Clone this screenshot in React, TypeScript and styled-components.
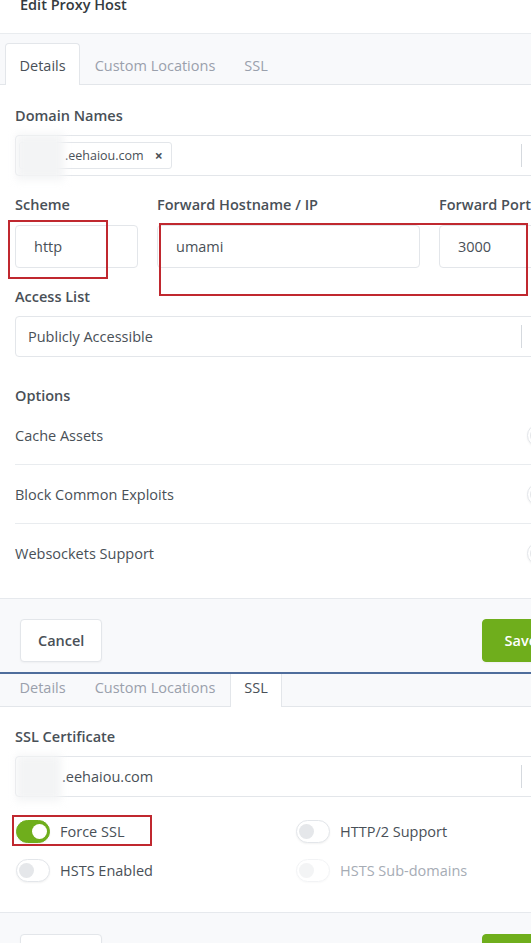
import styled, { createGlobalStyle } from 'styled-components';

const GlobalStyle = createGlobalStyle`
    html, body {
        margin: 0;
        padding: 0;
        background: #fff;
        overflow: hidden;
    }
    body {
        font-family: "Open Sans", "Noto Sans", sans-serif;
        color: #495057;
        -webkit-font-smoothing: antialiased;
    }
`;

const Page = styled.div`
    width: 580px;
`;

const Shot = styled.section`
    background: #fff;
`;

const Header = styled.header`
    height: 33px;
    padding: 0 20px;
    border-bottom: 1px solid #e9ecef;
    overflow: hidden;
`;

const Title = styled.h5`
    margin: -5px 0 0;
    font-size: 14.5px;
    font-weight: 600;
    line-height: 20px;
    color: #343a40;
`;

const TabBar = styled.nav<{ $height: number }>`
    display: flex;
    align-items: flex-end;
    height: ${(p) => p.$height}px;
    padding-left: 5px;
    background: #f8f9fb;
    border-bottom: 1px solid #e3e6ea;
`;

const Tab = styled.div<{ $active?: boolean; $compact?: boolean }>`
    height: ${(p) => (p.$compact ? 27 : 38)}px;
    padding: ${(p) => (p.$compact ? '0 13.5px 6px' : '3px 13.5px 0')};
    margin-bottom: -1px;
    line-height: ${(p) => (p.$compact ? 27 : 38)}px;
    font-size: 14.5px;
    color: ${(p) => (p.$active ? '#495057' : '#9aa0ac')};
    background: ${(p) => (p.$active ? '#fff' : 'transparent')};
    border: 1px solid ${(p) => (p.$active ? '#e3e6ea' : 'transparent')};
    border-bottom: none;
    border-top-width: ${(p) => (p.$compact ? 0 : 1)}px;
    border-radius: ${(p) => (p.$compact ? '0' : '4px 4px 0 0')};
`;

const Body = styled.div<{ $top: number; $bottom: number }>`
    padding: ${(p) => p.$top}px 15px ${(p) => p.$bottom}px;
`;

const Label = styled.div<{ $gap?: number }>`
    font-size: 14.5px;
    font-weight: 600;
    line-height: 20px;
    color: #495057;
    margin-bottom: ${(p) => p.$gap ?? 9}px;
`;

const Group = styled.div<{ $after?: number }>`
    margin-bottom: ${(p) => p.$after ?? 19}px;
`;

const FieldRow = styled.div`
    position: relative;
    display: grid;
    grid-template-columns: 123px 263px 1fr;
    column-gap: 19px;
    margin-bottom: 19px;
`;

const TextInput = styled.div`
    height: 43px;
    box-sizing: border-box;
    display: flex;
    align-items: center;
    padding: 0 18px;
    border: 1px solid #e3e6ea;
    border-radius: 4px;
    font-size: 14.5px;
    color: #495057;
`;

const Select = styled.div`
    position: relative;
    height: 41px;
    box-sizing: border-box;
    display: flex;
    align-items: center;
    border: 1px solid #e3e6ea;
    border-radius: 4px;
    font-size: 14.5px;
    color: #495057;
`;

const SelectValue = styled.div<{ $indent?: number }>`
    flex: 1;
    display: flex;
    align-items: center;
    padding-left: ${(p) => p.$indent ?? 12}px;
`;

const Indicator = styled.div`
    width: 42px;
    height: 23px;
    border-left: 1px solid #d5d9de;
`;

const Tag = styled.span`
    display: inline-flex;
    align-items: center;
    height: 27px;
    box-sizing: border-box;
    margin-left: 3px;
    padding: 0 8px 0 45px;
    gap: 11px;
    border: 1px solid #e3e6ea;
    border-radius: 3px;
    background: #fff;
    font-size: 12.5px;
`;

const TagRemove = styled.span`
    font-size: 14px;
    font-weight: 700;
    color: #495057;
`;

const Redaction = styled.span<{ $w: number }>`
    position: absolute;
    left: 0;
    top: -2px;
    width: ${(p) => p.$w}px;
    height: 46px;
    background: #f3f4f5;
    filter: blur(4px);
`;

const Annotation = styled.div<{ $x: number; $y: number; $w: number; $h: number }>`
    position: absolute;
    left: ${(p) => p.$x}px;
    top: ${(p) => p.$y}px;
    width: ${(p) => p.$w}px;
    height: ${(p) => p.$h}px;
    box-sizing: border-box;
    border: 2px solid #c0282f;
    pointer-events: none;
`;

const OptionRow = styled.div<{ $last?: boolean }>`
    display: flex;
    align-items: center;
    justify-content: space-between;
    height: 58px;
    padding-right: 4px;
    border-bottom: ${(p) => (p.$last ? 'none' : '1px solid #e9ecef')};
    font-size: 14.5px;
    color: #495057;
`;

const Switch = styled.span<{ $on?: boolean; $disabled?: boolean }>`
    position: relative;
    display: inline-block;
    width: 34px;
    height: 23px;
    box-sizing: border-box;
    flex: none;
    border-radius: 12px;
    border: 1px solid ${(p) => (p.$on ? '#6fae1c' : '#e3e6ea')};
    background: ${(p) => (p.$on ? '#6fae1c' : '#fff')};
    box-shadow: 0 1px 2px rgba(0, 0, 0, 0.05);
    opacity: ${(p) => (p.$disabled ? 0.45 : 1)};

    &::after {
        content: '';
        position: absolute;
        top: 3px;
        left: ${(p) => (p.$on ? '15px' : '2px')};
        width: 15px;
        height: 15px;
        border-radius: 50%;
        background: ${(p) => (p.$on ? '#fff' : '#e5e7ea')};
    }
`;

const SwitchGrid = styled.div`
    display: grid;
    grid-template-columns: 280px 1fr;
    row-gap: 16px;
    padding-top: 23px;
`;

const SwitchItem = styled.label<{ $disabled?: boolean }>`
    position: relative;
    display: flex;
    align-items: center;
    gap: 10px;
    margin-left: 1px;
    font-size: 14.5px;
    line-height: 23px;
    color: ${(p) => (p.$disabled ? '#a6acb5' : '#495057')};
`;

const Footer = styled.footer<{ $height: number; $padTop: number }>`
    display: flex;
    align-items: flex-start;
    height: ${(p) => p.$height}px;
    box-sizing: border-box;
    padding: ${(p) => p.$padTop}px 20px 0;
    overflow: hidden;
    background: #f8f9fb;
    border-top: 1px solid #e6e9ed;
`;

const Button = styled.button<{ $primary?: boolean }>`
    height: 43px;
    padding: 0 ${(p) => (p.$primary ? 22 : 17)}px;
    margin-left: ${(p) => (p.$primary ? 'auto' : '0')};
    border-radius: 4px;
    border: 1px solid ${(p) => (p.$primary ? '#6fae1c' : '#e3e6ea')};
    background: ${(p) => (p.$primary ? '#6fae1c' : '#fff')};
    color: ${(p) => (p.$primary ? '#fff' : '#495057')};
    font-family: inherit;
    font-size: 14.5px;
    font-weight: 600;
    box-shadow: 0 1px 2px rgba(0, 0, 0, 0.04);
`;

const Seam = styled.div`
    height: 2px;
    background: #4f6d9c;
`;

const options = ['Cache Assets', 'Block Common Exploits', 'Websockets Support'];

function App() {
    return (
        <Page>
            <GlobalStyle />
            <Shot>
                <Header>
                    <Title>Edit Proxy Host</Title>
                </Header>
                <TabBar $height={50}>
                    <Tab $active>Details</Tab>
                    <Tab>Custom Locations</Tab>
                    <Tab>SSL</Tab>
                </TabBar>
                <Body $top={21} $bottom={16}>
                    <Group>
                        <Label>Domain Names</Label>
                        <Select>
                            <SelectValue $indent={0}>
                                <Tag>
                                    .eehaiou.com
                                    <TagRemove>×</TagRemove>
                                </Tag>
                            </SelectValue>
                            <Indicator />
                            <Redaction $w={48} />
                        </Select>
                    </Group>
                    <FieldRow>
                        <div>
                            <Label $gap={10}>Scheme</Label>
                            <TextInput>http</TextInput>
                        </div>
                        <div>
                            <Label $gap={10}>Forward Hostname / IP</Label>
                            <TextInput>umami</TextInput>
                        </div>
                        <div>
                            <Label $gap={10}>Forward Port</Label>
                            <TextInput>3000</TextInput>
                        </div>
                        <Annotation $x={-7} $y={25} $w={100} $h={59} />
                        <Annotation $x={144} $y={28} $w={369} $h={73} />
                    </FieldRow>
                    <Group $after={29}>
                        <Label>Access List</Label>
                        <Select>
                            <SelectValue>Publicly Accessible</SelectValue>
                            <Indicator />
                        </Select>
                    </Group>
                    <Label $gap={0}>Options</Label>
                    {options.map((name, i) => (
                        <OptionRow key={name} $last={i === options.length - 1}>
                            {name}
                            <Switch />
                        </OptionRow>
                    ))}
                </Body>
                <Footer $height={74} $padTop={20}>
                    <Button>Cancel</Button>
                    <Button $primary>Save</Button>
                </Footer>
            </Shot>
            <Seam />
            <Shot>
                <TabBar $height={32}>
                    <Tab $compact>Details</Tab>
                    <Tab $compact>Custom Locations</Tab>
                    <Tab $compact $active>
                        SSL
                    </Tab>
                </TabBar>
                <Body $top={20} $bottom={30}>
                    <Label>SSL Certificate</Label>
                    <Select>
                        <SelectValue $indent={46}>.eehaiou.com</SelectValue>
                        <Indicator />
                        <Redaction $w={45} />
                    </Select>
                    <SwitchGrid>
                        <SwitchItem>
                            <Switch $on />
                            Force SSL
                            <Annotation $x={-4} $y={-5} $w={140} $h={31} />
                        </SwitchItem>
                        <SwitchItem>
                            <Switch />
                            HTTP/2 Support
                        </SwitchItem>
                        <SwitchItem>
                            <Switch />
                            HSTS Enabled
                        </SwitchItem>
                        <SwitchItem $disabled>
                            <Switch $disabled />
                            HSTS Sub-domains
                        </SwitchItem>
                    </SwitchGrid>
                </Body>
                <Footer $height={40} $padTop={21}>
                    <Button>Cancel</Button>
                    <Button $primary>Save</Button>
                </Footer>
            </Shot>
        </Page>
    );
}

export default App;
